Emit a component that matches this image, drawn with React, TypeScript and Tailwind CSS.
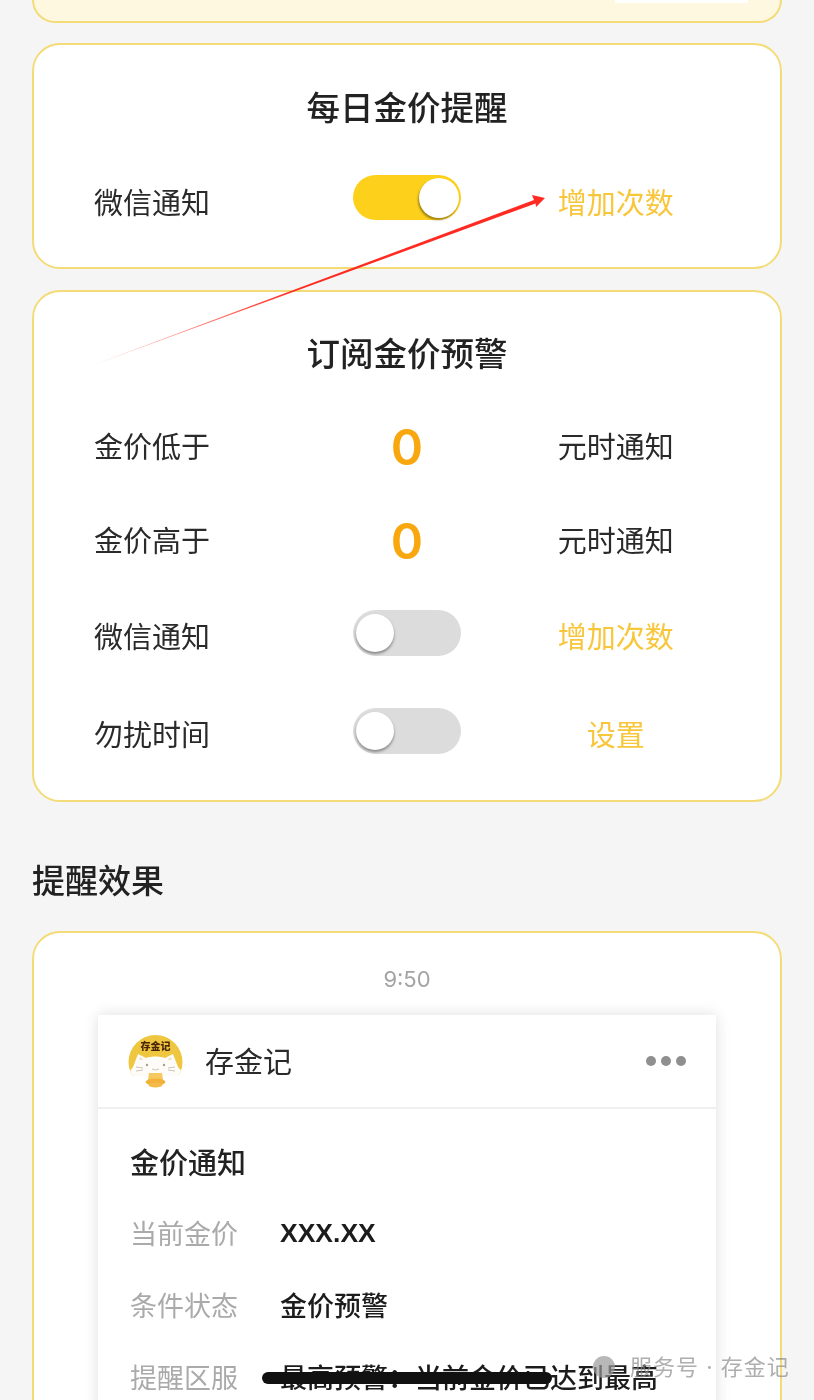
import React from 'react';

const cjk = "font-['Noto_Sans_CJK_SC','Noto_Sans',sans-serif]";

const Toggle: React.FC<{ on?: boolean }> = ({ on }) =>
  on ? (
    <div className="mb-[7px] flex h-[45px] w-[108px] items-center justify-end rounded-full bg-[#fdd01c] pr-[2px]">
      <div className="h-[40px] w-[40px] rounded-full bg-white shadow-[-1px_2px_2px_rgba(90,70,0,0.55)]" />
    </div>
  ) : (
    <div className="mb-[4px] flex h-[46px] w-[108px] items-center rounded-full bg-[#dcdcdc] pl-[3px]">
      <div className="h-[38px] w-[38px] rounded-full bg-white shadow-[0_2px_3px_rgba(0,0,0,0.4)]" />
    </div>
  );

const Row: React.FC<{ label: string; center: React.ReactNode; right: string; accent?: boolean; className?: string }> = ({
  label,
  center,
  right,
  accent,
  className,
}) => (
  <div className={`grid grid-cols-3 items-center px-[60px] ${className ?? ''}`}>
    <div className="text-[29px] leading-[42px] text-[#2a2a2a]">{label}</div>
    <div className="flex h-[48px] items-center justify-center">{center}</div>
    <div className={`text-center text-[29px] leading-[42px] ${accent ? 'text-[#f8c63a]' : 'text-[#2a2a2a]'}`}>{right}</div>
  </div>
);

const Zero = () => (
  <span className="mt-[6px] font-['Inter',sans-serif] text-[49px] font-semibold leading-[48px] text-[#f9a70f]">0</span>
);

const Avatar = () => (
  <svg width="58" height="58" viewBox="0 0 58 58" className="mt-[5px] shrink-0">
    <defs>
      <clipPath id="avatarClip">
        <circle cx="28.5" cy="27" r="27" />
      </clipPath>
    </defs>
    <circle cx="28.5" cy="27" r="27" fill="#eec63f" />
    <g clipPath="url(#avatarClip)">
      <path d="M0 40 L6 32 L11 19 L19 23 C25 21 32 21 38 23 L46 19 L51 32 L58 40 L58 58 L0 58 Z" fill="#fdfcf8" />
    </g>
    <path d="M3 41 C6 50 14 56 20 58 L37 58 C43 56 51 50 54 41 Z" fill="#ffffff" />
    <path d="M12.5 25 L13 22 L16.5 24.5 Z M44.5 25 L44 22 L40.5 24.5 Z" fill="#f3dcc0" />
    <circle cx="20" cy="30" r="1.2" fill="#a89f8c" />
    <circle cx="37" cy="30" r="1.2" fill="#a89f8c" />
    <path d="M25 34 Q28.5 36 32 34 M9 32 L16 33 M9 36 L16 35 M41 33 L48 32 M41 35 L48 36" stroke="#c4bdab" strokeWidth="0.9" fill="none" />
    <path d="M22 38 L35 38 L36 45 L21 45 Z" fill="#f5c860" />
    <ellipse cx="28.5" cy="47" rx="10" ry="3.5" fill="#f2b23a" />
    <ellipse cx="28.5" cy="50" rx="7" ry="2.5" fill="#f4ba4a" />
    <text x="28.5" y="15" textAnchor="middle" fontSize="10" fontWeight="900" fill="#4a2408" fontFamily="Noto Sans CJK SC">存金记</text>
  </svg>
);

const InfoRow: React.FC<{ label: string; value: string; className?: string; valueClassName?: string }> = ({
  label,
  value,
  className,
  valueClassName,
}) => (
  <div className={`flex items-center ${className ?? ''}`}>
    <div className="w-[150px] shrink-0 text-[27px] leading-[40px] text-[#aaa]">{label}</div>
    <div className={`whitespace-nowrap text-[27px] font-medium leading-[40px] text-[#1c1c1c] ${valueClassName ?? ''}`}>{value}</div>
  </div>
);

export default function App() {
  return (
    <div className={`relative h-[1400px] w-[814px] overflow-hidden bg-[#f5f5f5] blur-[0.5px] ${cjk}`}>
      <div className="flex flex-col px-[32px]">
        {/* bottom edge of the card above */}
        <div className="flex h-[23px] justify-end rounded-b-[28px] border-2 border-t-0 border-[#f3dc78] bg-[#fff8e0] pr-[32px]">
          <div className="h-[3px] w-[133px] bg-white" />
        </div>

        <div className="mt-[20px] h-[226px] rounded-[28px] border-2 border-[#f3dc78] bg-white">
          <div className="mt-[36px] text-center text-[33.5px] font-medium leading-[50px] text-[#222]">每日金价提醒</div>
          <Row className="mt-[46px]" label="微信通知" center={<Toggle on />} right="增加次数" accent />
        </div>

        <div className="mt-[21px] h-[512px] rounded-[28px] border-2 border-[#f3dc78] bg-white">
          <div className="mt-[35px] text-center text-[33.5px] font-medium leading-[50px] text-[#222]">订阅金价预警</div>
          <Row className="mt-[44px]" label="金价低于" center={<Zero />} right="元时通知" />
          <Row className="mt-[46px]" label="金价高于" center={<Zero />} right="元时通知" />
          <Row className="mt-[48px]" label="微信通知" center={<Toggle />} right="增加次数" accent />
          <Row className="mt-[50px]" label="勿扰时间" center={<Toggle />} right="设置" accent />
        </div>

        <div className="mt-[52px] text-[33px] font-medium leading-[50px] text-[#222]">提醒效果</div>

        <div className="mt-[27px] h-[600px] rounded-[28px] border-2 border-[#f3dc78] bg-white px-[64px]">
          <div className="mt-[30px] text-center font-['Inter',sans-serif] text-[22px] leading-[32px] text-[#a3a3a3]">9:50</div>
          <div className="mt-[20px] bg-white shadow-[0_0_14px_rgba(0,0,0,0.13)]">
            <div className="flex h-[94px] items-center border-b-2 border-[#f0f0f0] pl-[29px] pr-[30px]">
              <Avatar />
              <div className="ml-[20px] text-[29px] text-[#2a2a2a]">存金记</div>
              <div className="ml-auto flex gap-[5px]">
                <span className="h-[10px] w-[10px] rounded-full bg-[#8f8f8f]" />
                <span className="h-[10px] w-[10px] rounded-full bg-[#8f8f8f]" />
                <span className="h-[10px] w-[10px] rounded-full bg-[#8f8f8f]" />
              </div>
            </div>
            <div className="px-[32px] pt-[31px]">
              <div className="text-[29px] font-medium leading-[42px] text-[#222]">金价通知</div>
              <InfoRow
                className="mt-[31px]"
                label="当前金价"
                value="XXX.XX"
                valueClassName="font-['Liberation_Sans',sans-serif] !font-bold !text-[26.5px]"
              />
              <InfoRow className="mt-[32px]" label="条件状态" value="金价预警" />
              <InfoRow className="mt-[32px]" label="提醒区服" value="最高预警：当前金价已达到最高" />
            </div>
            <div className="h-[200px]" />
          </div>
        </div>
      </div>

      {/* annotation arrow drawn over the screenshot */}
      <svg className="absolute left-0 top-0" width="814" height="400" viewBox="0 0 814 400">
        <defs>
          <linearGradient id="arrowFade" gradientUnits="userSpaceOnUse" x1="88" y1="367" x2="300" y2="290">
            <stop offset="0" stopColor="#ff3b30" stopOpacity="0.25" />
            <stop offset="1" stopColor="#ff2a22" />
          </linearGradient>
        </defs>
        <path d="M88 367 L534 200 L532 195 L545 198 L536 207 L535.6 203.4 Z" fill="url(#arrowFade)" />
      </svg>

      {/* watermark */}
      <div className="absolute left-[593px] top-[1352px] flex items-center gap-[15px] font-['Inter','Noto_Sans_CJK_SC',sans-serif] text-[22px] leading-[30px] text-[#8c8c8c]/70">
        <span className="h-[22px] w-[22px] rounded-full bg-[#9a9a9a]/70" />
        <span className="whitespace-nowrap tracking-[1px]">服务号 · 存金记</span>
      </div>

      {/* home indicator */}
      <div className="absolute left-[262px] top-[1372px] h-[12px] w-[290px] rounded-full bg-[#111]" />
    </div>
  );
}
